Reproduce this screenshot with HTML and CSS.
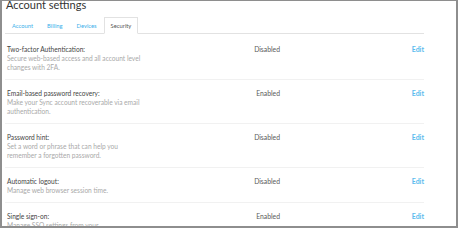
FILE: index.html
```html
<!DOCTYPE html>
<html lang="en">
<head>
    <meta charset="utf-8">
    <title>Account settings</title>
    <link rel="stylesheet" href="styles.css">
</head>
<body>
<div class="frame">
    <div class="settings">
        <h1 class="settings-title">Account settings</h1>
        <ul class="tabs">
            <li><a href="#">Account</a></li>
            <li><a href="#">Billing</a></li>
            <li><a href="#">Devices</a></li>
            <li class="active"><a href="#">Security</a></li>
        </ul>
        <div class="rows">
            <div class="row">
                <div class="info">
                    <p class="label">Two-factor Authentication:</p>
                    <p class="desc">Secure web-based access and all account level changes with 2FA.</p>
                </div>
                <div class="status">Disabled</div>
                <div class="action"><a href="#">Edit</a></div>
            </div>
            <div class="row">
                <div class="info">
                    <p class="label">Email-based password recovery:</p>
                    <p class="desc">Make your Sync account recoverable via email authentication.</p>
                </div>
                <div class="status">Enabled</div>
                <div class="action"><a href="#">Edit</a></div>
            </div>
            <div class="row">
                <div class="info">
                    <p class="label">Password hint:</p>
                    <p class="desc">Set a word or phrase that can help you remember a forgotten password.</p>
                </div>
                <div class="status">Disabled</div>
                <div class="action"><a href="#">Edit</a></div>
            </div>
            <div class="row">
                <div class="info">
                    <p class="label">Automatic logout:</p>
                    <p class="desc">Manage web browser session time.</p>
                </div>
                <div class="status">Disabled</div>
                <div class="action"><a href="#">Edit</a></div>
            </div>
            <div class="row">
                <div class="info">
                    <p class="label">Single sign-on:</p>
                    <p class="desc">Manage SSO settings from your<br>identity provider.</p>
                </div>
                <div class="status">Enabled</div>
                <div class="action"><a href="#">Edit</a></div>
            </div>
        </div>
    </div>
</div>
</body>
</html>
```

FILE: styles.css
```css
body {
    margin: 0;
    background: #fff;
    font-family: Lato, "Liberation Sans", Arial, sans-serif;
    color: #444;
}

p, ul, li, h1 {
    margin: 0;
    padding: 0;
    list-style: none;
}

a {
    text-decoration: none;
}

.frame {
    width: 458px;
    height: 228px;
    box-sizing: border-box;
    border: 2px solid #8e8e8e;
    border-top-width: 1px;
    overflow: hidden;
}

.settings {
    padding: 0 32px 0 3px;
}

.settings-title {
    font-size: 11px;
    font-weight: normal;
    line-height: 12px;
    color: #333;
    margin-top: -2px;
    padding-left: 1px;
}

.tabs {
    display: flex;
    margin-top: 6px;
    border-bottom: 1px solid #e2e2e2;
}

.tabs li {
    margin-bottom: -1px;
    border: 1px solid transparent;
    border-bottom: 0;
    font-size: 5.8px;
    line-height: 15px;
}

.tabs li a {
    display: block;
    padding: 0 6px;
    color: #3bb0ea;
}

.tabs li.active {
    background: #fff;
    border-color: #e2e2e2;
    border-bottom: 1px solid #fff;
}

.tabs li.active a {
    color: #555;
}

.rows {
    padding-top: 2px;
}

.row {
    display: grid;
    grid-template-columns: 213px 60px 1fr;
    align-items: start;
    padding: 8px 0 7px 2px;
    border-top: 1px solid #f1f1f1;
    font-size: 6.6px;
    line-height: 10px;
}

.row:first-child {
    border-top: 0;
}

.label {
    color: #444;
}

.desc {
    max-width: 142px;
    line-height: 9px;
    color: #a9a9a9;
}

.status {
    font-size: 6.8px;
    color: #5a5a5a;
    text-align: right;
}

.action {
    font-size: 7px;
    text-align: right;
}

.action a {
    font-weight: bold;
    color: #5abbee;
}
```
